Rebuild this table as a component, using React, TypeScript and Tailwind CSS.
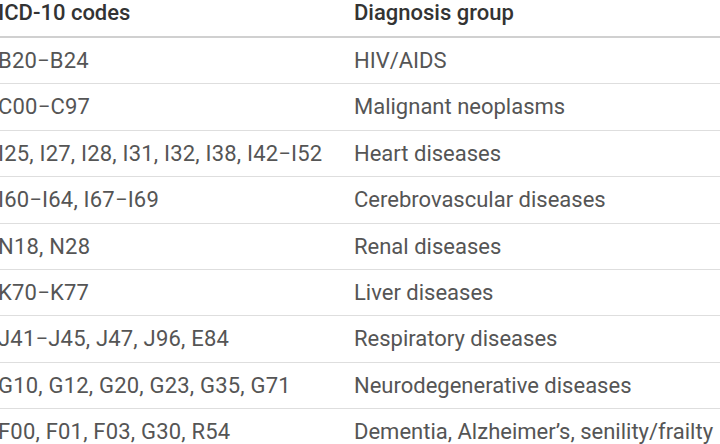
import React from 'react';

const ROWS: { codes: string; group: string }[] = [
  { codes: 'B20−B24', group: 'HIV/AIDS' },
  { codes: 'C00−C97', group: 'Malignant neoplasms' },
  { codes: 'I25, I27, I28, I31, I32, I38, I42−I52', group: 'Heart diseases' },
  { codes: 'I60−I64, I67−I69', group: 'Cerebrovascular diseases' },
  { codes: 'N18, N28', group: 'Renal diseases' },
  { codes: 'K70−K77', group: 'Liver diseases' },
  { codes: 'J41−J45, J47, J96, E84', group: 'Respiratory diseases' },
  { codes: 'G10, G12, G20, G23, G35, G71', group: 'Neurodegenerative diseases' },
  { codes: 'F00, F01, F03, G30, R54', group: 'Dementia, Alzheimer’s, senility/frailty' },
];

export default function App() {
  return (
    <div className="w-[720px] h-[444px] overflow-hidden bg-white font-['Roboto',sans-serif] text-[22px] leading-[26px]">
      <div className="-ml-[2px] w-[724px]">
        <div className="grid grid-cols-[356px_1fr] h-[38px] border-b-2 border-[#d0d0d0] font-medium text-[#333]">
          <div>ICD-10 codes</div>
          <div>Diagnosis group</div>
        </div>
        {ROWS.map(r => (
          <div key={r.codes} className="grid grid-cols-[356px_1fr] h-[46.4px] pt-[10px] border-b border-[#dedede] text-[#555] whitespace-nowrap">
            <div className="tracking-[0.2px]">{r.codes}</div>
            <div>{r.group}</div>
          </div>
        ))}
      </div>
    </div>
  );
}
